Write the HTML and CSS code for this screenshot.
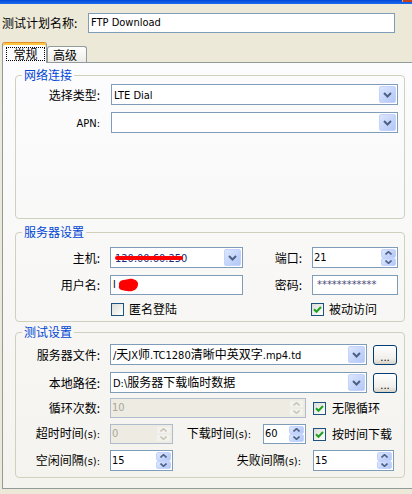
FILE: index.html
```html
<!DOCTYPE html>
<html lang="zh-CN">
<head>
  <meta charset="UTF-8">
  <title>测试计划</title>
  <link rel="stylesheet" href="styles.css">
</head>
<body>
  <div class="titlebar"><span class="close-edge"></span></div>

  <div class="plan-row">
    <span class="plan-label">测试计划名称:</span>
    <div class="edit plan-edit"><span class="lat">FTP Download</span></div>
  </div>

  <div class="tabs">
    <div class="tab active"><span class="focus">常规</span></div>
    <div class="tab">高级</div>
  </div>

  <div class="panel">
    <!-- 网络连接 -->
    <fieldset class="group g-net">
      <legend>网络连接</legend>
      <div class="row">
        <span class="lbl">选择类型:</span>
        <div class="combo w-net">
          <span class="val"><span class="lat">LTE Dial</span></span>
          <span class="drop"><svg width="9" height="6" viewBox="0 0 9 6"><path d="M1 1l3.5 3.5L8 1" fill="none" stroke="#4D6185" stroke-width="2"/></svg></span>
        </div>
      </div>
      <div class="row">
        <span class="lbl"><span class="lat">APN:</span></span>
        <div class="combo w-net">
          <span class="val"></span>
          <span class="drop"><svg width="9" height="6" viewBox="0 0 9 6"><path d="M1 1l3.5 3.5L8 1" fill="none" stroke="#4D6185" stroke-width="2"/></svg></span>
        </div>
      </div>
    </fieldset>

    <!-- 服务器设置 -->
    <fieldset class="group g-srv">
      <legend>服务器设置</legend>
      <div class="row">
        <span class="lbl">主机:</span>
        <div class="combo w-host">
          <span class="val"><span class="lat host">120.00.60.250</span></span>
          <span class="drop"><svg width="9" height="6" viewBox="0 0 9 6"><path d="M1 1l3.5 3.5L8 1" fill="none" stroke="#4D6185" stroke-width="2"/></svg></span>
          <span class="scribble-line"></span>
        </div>
        <span class="mid-lbl">端口:</span>
        <div class="spin w-port">
          <span class="val"><span class="lat">21</span></span>
          <span class="arrows">
            <span class="arr"><svg width="7" height="4" viewBox="0 0 7 4"><path d="M0.5 3.5L3.5 0.7L6.5 3.5" fill="none" stroke="#4D6185" stroke-width="1.6"/></svg></span>
            <span class="arr"><svg width="7" height="4" viewBox="0 0 7 4"><path d="M0.5 0.5L3.5 3.3L6.5 0.5" fill="none" stroke="#4D6185" stroke-width="1.6"/></svg></span>
          </span>
        </div>
      </div>
      <div class="row r20">
        <span class="lbl">用户名:</span>
        <div class="edit w-host">
          <span class="lat">l</span>
          <svg class="scribble-blob" width="23" height="15" viewBox="0 0 23 15"><path d="M2 5C4 1 9 2 12 1S22 2 21 7 16 14 10 13 1 12 2 7Z" fill="#F00"/></svg>
        </div>
        <span class="mid-lbl">密码:</span>
        <div class="edit w-port pwd"><span class="lat">************</span></div>
      </div>
      <div class="row r14">
        <span class="lbl"></span>
        <span class="check c-anon"><span class="box"></span>匿名登陆</span>
        <span class="check"><span class="box"><svg width="9" height="9" viewBox="0 0 9 9"><path d="M1 4.2l2.5 2.5L8 2" fill="none" stroke="#21A121" stroke-width="2"/></svg></span>被动访问</span>
      </div>
    </fieldset>

    <!-- 测试设置 -->
    <fieldset class="group g-test">
      <legend>测试设置</legend>
      <div class="row">
        <span class="lbl">服务器文件:</span>
        <div class="combo w-file">
          <span class="val"><span class="lat">/</span>天<span class="lat">JX</span>师<span class="lat">.TC1280</span>清晰中英双字<span class="lat">.mp4.td</span></span>
          <span class="drop"><svg width="9" height="6" viewBox="0 0 9 6"><path d="M1 1l3.5 3.5L8 1" fill="none" stroke="#4D6185" stroke-width="2"/></svg></span>
        </div>
        <span class="btn"><span class="lat">...</span></span>
      </div>
      <div class="row">
        <span class="lbl">本地路径:</span>
        <div class="combo w-file">
          <span class="val"><span class="lat">D:\</span>服务器下载临时数据</span>
          <span class="drop"><svg width="9" height="6" viewBox="0 0 9 6"><path d="M1 1l3.5 3.5L8 1" fill="none" stroke="#4D6185" stroke-width="2"/></svg></span>
        </div>
        <span class="btn"><span class="lat">...</span></span>
      </div>
      <div class="row r20 gap5">
        <span class="lbl">循环次数:</span>
        <div class="spin off w-loop">
          <span class="val"><span class="lat">10</span></span>
          <span class="arrows">
            <span class="arr"><svg width="7" height="4" viewBox="0 0 7 4"><path d="M0.5 3.5L3.5 0.7L6.5 3.5" fill="none" stroke="#C9C7BA" stroke-width="1.6"/></svg></span>
            <span class="arr"><svg width="7" height="4" viewBox="0 0 7 4"><path d="M0.5 0.5L3.5 3.3L6.5 0.5" fill="none" stroke="#C9C7BA" stroke-width="1.6"/></svg></span>
          </span>
        </div>
        <span class="check c-right"><span class="box"><svg width="9" height="9" viewBox="0 0 9 9"><path d="M1 4.2l2.5 2.5L8 2" fill="none" stroke="#21A121" stroke-width="2"/></svg></span>无限循环</span>
      </div>
      <div class="row r20 gap6">
        <span class="lbl">超时时间<span class="lat">(s):</span></span>
        <div class="spin off w-small">
          <span class="val"><span class="lat">0</span></span>
          <span class="arrows">
            <span class="arr"><svg width="7" height="4" viewBox="0 0 7 4"><path d="M0.5 3.5L3.5 0.7L6.5 3.5" fill="none" stroke="#C9C7BA" stroke-width="1.6"/></svg></span>
            <span class="arr"><svg width="7" height="4" viewBox="0 0 7 4"><path d="M0.5 0.5L3.5 3.3L6.5 0.5" fill="none" stroke="#C9C7BA" stroke-width="1.6"/></svg></span>
          </span>
        </div>
        <span class="mid-lbl w-dl">下载时间<span class="lat">(s):</span></span>
        <div class="spin w-dlspin">
          <span class="val"><span class="lat">60</span></span>
          <span class="arrows">
            <span class="arr"><svg width="7" height="4" viewBox="0 0 7 4"><path d="M0.5 3.5L3.5 0.7L6.5 3.5" fill="none" stroke="#4D6185" stroke-width="1.6"/></svg></span>
            <span class="arr"><svg width="7" height="4" viewBox="0 0 7 4"><path d="M0.5 0.5L3.5 3.3L6.5 0.5" fill="none" stroke="#4D6185" stroke-width="1.6"/></svg></span>
          </span>
        </div>
        <span class="check c-right"><span class="box"><svg width="9" height="9" viewBox="0 0 9 9"><path d="M1 4.2l2.5 2.5L8 2" fill="none" stroke="#21A121" stroke-width="2"/></svg></span>按时间下载</span>
      </div>
      <div class="row gap6">
        <span class="lbl">空闲间隔<span class="lat">(s):</span></span>
        <div class="spin w-small">
          <span class="val"><span class="lat">15</span></span>
          <span class="arrows">
            <span class="arr"><svg width="7" height="4" viewBox="0 0 7 4"><path d="M0.5 3.5L3.5 0.7L6.5 3.5" fill="none" stroke="#4D6185" stroke-width="1.6"/></svg></span>
            <span class="arr"><svg width="7" height="4" viewBox="0 0 7 4"><path d="M0.5 0.5L3.5 3.3L6.5 0.5" fill="none" stroke="#4D6185" stroke-width="1.6"/></svg></span>
          </span>
        </div>
        <span class="mid-lbl w-fail">失败间隔<span class="lat">(s):</span></span>
        <div class="spin w-fspin">
          <span class="val"><span class="lat">15</span></span>
          <span class="arrows">
            <span class="arr"><svg width="7" height="4" viewBox="0 0 7 4"><path d="M0.5 3.5L3.5 0.7L6.5 3.5" fill="none" stroke="#4D6185" stroke-width="1.6"/></svg></span>
            <span class="arr"><svg width="7" height="4" viewBox="0 0 7 4"><path d="M0.5 0.5L3.5 3.3L6.5 0.5" fill="none" stroke="#4D6185" stroke-width="1.6"/></svg></span>
          </span>
        </div>
      </div>
    </fieldset>
  </div>
</body>
</html>
```

FILE: styles.css
```css
* {
  box-sizing: border-box;
}

html, body {
  overflow: hidden;
}

body {
  margin: 0;
  width: 412px;
  height: 494px;
  background: #ECE9D8;
  font-family: "Noto Sans CJK SC", sans-serif;
  font-size: 12px;
  line-height: 16px;
  color: #000;
}

/* latin runs: narrow, like the old system font */
.lat {
  font-family: "DejaVu Sans Condensed", "DejaVu Sans", sans-serif;
  font-stretch: condensed;
  font-size: 11px;
}

.titlebar {
  height: 4px;
  display: flex;
  justify-content: flex-end;
  background: linear-gradient(#0047D6, #1E6CF0);
}

.close-edge {
  width: 10px;
  height: 2px;
  background: #C4411E;
  border-left: 1px solid #E8A58A;
}

/* plan name */
.plan-row {
  display: flex;
  align-items: center;
  height: 20px;
  margin-top: 9px;
  padding-left: 2px;
}

.plan-label {
  width: 86px;
}

.edit {
  position: relative;
  display: flex;
  align-items: center;
  height: 20px;
  border: 1px solid #7F9DB9;
  background: #fff;
  padding-left: 2px;
  white-space: nowrap;
}

.plan-edit {
  width: 307px;
}

/* tabs */
.tabs {
  position: relative;
  z-index: 1;
  display: flex;
  align-items: flex-end;
  height: 21px;
  margin-top: 9px;
  margin-bottom: -1px;
  padding-left: 2px;
}

.tab {
  width: 40px;
  height: 16px;
  margin-bottom: 1px;
  border: 1px solid #919B9C;
  border-bottom: none;
  border-radius: 3px 3px 0 0;
  background: linear-gradient(#FFFFFF, #ECEBE6);
  padding-right: 4px;
  text-align: center;
  line-height: 15px;
}

.tab.active {
  width: 45px;
  height: 21px;
  margin-bottom: 0;
  padding-right: 0;
  background: #FCFCFE;
  border-top-color: #E68B2C;
  box-shadow: inset 0 2px 0 #FFC83C;
}

.focus {
  display: block;
  height: 14px;
  margin: 4px 1px 0 3px;
  border: 1px dotted #000;
  line-height: 12px;
}

/* panel */
.panel {
  width: 420px;
  margin-left: 2px;
  padding: 0 0 10px;
  border: 1px solid #919B9C;
  background: linear-gradient(#FCFCFE, #F4F3EE);
}

.group {
  width: 390px;
  min-width: 0;
  margin: 0 0 0 12px;
  border: 1px solid #D0D0BF;
  border-radius: 4px;
}

.group legend {
  margin-left: 6px;
  padding: 0 2px;
  color: #0046D5;
  line-height: 14px;
}

.g-net {
  margin-top: 5px;
  padding: 2px 0 85px;
}

.g-srv {
  margin-top: 6px;
  padding: 8px 0 5px;
}

.g-test {
  margin-top: 3px;
  padding: 5px 0 6px;
}

.row {
  display: flex;
  align-items: center;
  height: 21px;
}

.row + .row {
  margin-top: 7px;
}

.row.r20 {
  height: 20px;
}

.row.r14 {
  height: 14px;
}

.row.gap5 {
  margin-top: 5px;
}

.row.gap6 {
  margin-top: 6px;
}

.lbl {
  flex: none;
  width: 84px;
  margin-right: 10px;
  text-align: right;
  white-space: nowrap;
}

.g-net .lbl {
  margin-right: 11px;
}

.mid-lbl {
  flex: none;
  width: 69px;
  padding-right: 10px;
  text-align: right;
  white-space: nowrap;
}

.mid-lbl.w-dl {
  width: 90px;
  padding-right: 12px;
}

.mid-lbl.w-fail {
  width: 140px;
  padding-right: 12px;
}

/* combo box */
.combo {
  position: relative;
  flex: none;
  display: flex;
  align-items: center;
  height: 21px;
  border: 1px solid #7F9DB9;
  background: #fff;
  padding-left: 2px;
}

.val {
  flex: 1;
  white-space: nowrap;
}

.drop {
  display: flex;
  align-items: center;
  justify-content: center;
  width: 17px;
  height: 17px;
  margin-right: 1px;
  border: 1px solid #C3D3FD;
  border-radius: 2px;
  background: linear-gradient(135deg, #DCE6FE, #B2C7F6);
}

.w-net { width: 287px; }
.w-host { width: 133px; }
.w-port { width: 86px; }
.w-file { width: 257px; }
.w-loop { width: 196px; }
.w-small { width: 63px; }
.w-dlspin { width: 43px; }
.w-fspin { width: 81px; }

.host {
  padding-left: 2px;
  color: #1B2A7A;
}

.pwd {
  padding-left: 4px;
  color: #4A4A7A;
}

/* red marks over private values */
.scribble-line {
  position: absolute;
  left: 4px;
  top: 8px;
  width: 68px;
  height: 4px;
  border-radius: 2px;
  background: #F00;
}

.scribble-blob {
  position: absolute;
  left: 6px;
  top: 2px;
}

/* spin box */
.spin {
  flex: none;
  display: flex;
  align-items: stretch;
  height: 21px;
  border: 1px solid #7F9DB9;
  background: #fff;
  padding-left: 1px;
}

.row.r20 .spin {
  height: 20px;
}

.spin .val {
  display: flex;
  align-items: center;
}

.arrows {
  display: flex;
  flex-direction: column;
  width: 15px;
  margin: 1px;
}

.arr {
  flex: 1;
  display: flex;
  align-items: center;
  justify-content: center;
  border: 1px solid #C3D3FD;
  border-radius: 2px;
  background: linear-gradient(135deg, #DCE6FE, #B2C7F6);
}

.spin.off {
  border-color: #AFBCCB;
  background: #EDEBE2;
  color: #ACA899;
}

.spin.off .arr {
  border-color: #EDECE6;
  background: #F3F2EC;
}

/* checkbox */
.check {
  display: flex;
  align-items: center;
  gap: 5px;
  white-space: nowrap;
}

.c-anon {
  width: 200px;
  margin-left: 1px;
}

.c-right {
  margin-left: 7px;
  gap: 6px;
}

.box {
  display: flex;
  align-items: center;
  justify-content: center;
  width: 13px;
  height: 13px;
  border: 1px solid #1C5180;
  background: linear-gradient(135deg, #DCDCD7, #FFFFFF);
}

/* browse button */
.btn {
  flex: none;
  width: 24px;
  height: 20px;
  margin-left: 6px;
  border: 1px solid #003C74;
  border-radius: 3px;
  background: linear-gradient(#FFFFFF, #F0EFEA 70%, #D8D2C6);
  text-align: center;
  line-height: 20px;
}
```
